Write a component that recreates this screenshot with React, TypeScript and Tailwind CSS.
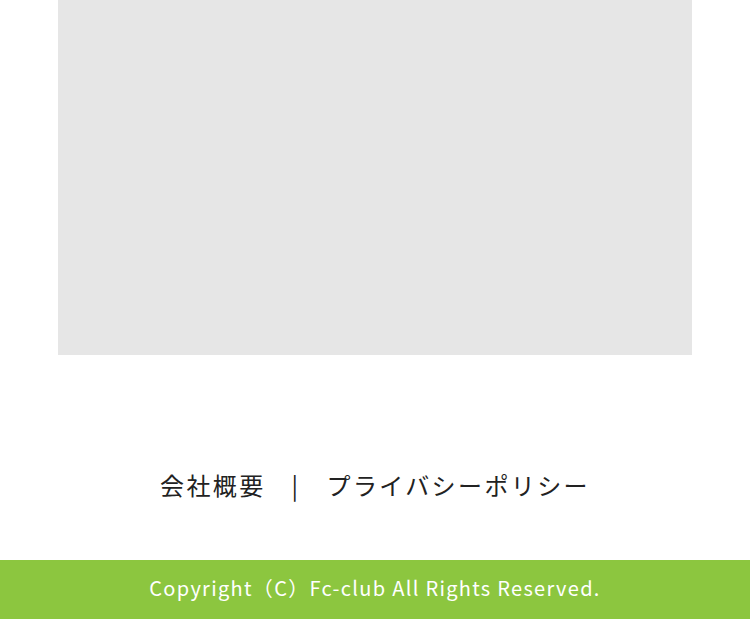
export default function App() {
  return (
    <div className="w-[750px] h-[619px] bg-white flex flex-col" style={{ fontFamily: '"Noto Sans CJK JP", "Noto Sans", sans-serif' }}>
      <div className="mx-[58px] w-[634px] h-[355px] bg-[#e6e6e6] shrink-0" />
      <nav className="flex-1 flex items-center justify-center pt-[54px] text-[24px] text-[#222] tracking-[0.1em]">
        <span>会社概要</span>
        <span className="mx-[26px]">|</span>
        <span>プライバシーポリシー</span>
      </nav>
      <footer className="h-[59px] bg-[#8cc63f] flex items-center justify-center pb-[3px] text-white text-[20px] tracking-[0.065em] shrink-0">
        Copyright（C）Fc-club All Rights Reserved.
      </footer>
    </div>
  );
}
